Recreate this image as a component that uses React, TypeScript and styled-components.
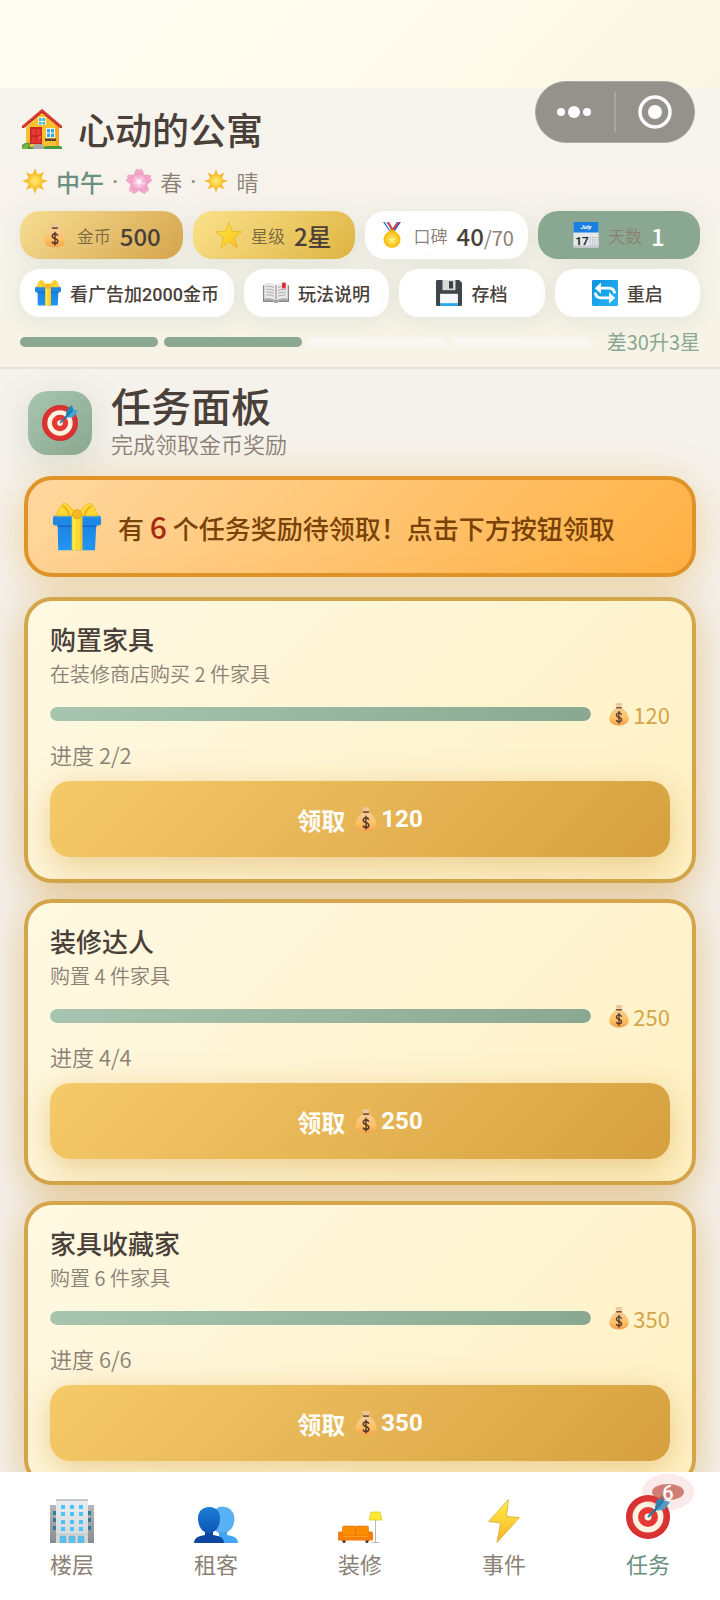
import React from 'react';
import styled, { createGlobalStyle, css } from 'styled-components';

type ChipTone = 'coin' | 'star' | 'plain' | 'day';

interface IconProps {
  size: number;
}

const IconDefs: React.FC = () => (
  <HiddenSvg aria-hidden="true">
    <defs>
      <radialGradient id="sunFill">
        <stop offset="0" stopColor="#fff176" />
        <stop offset="1" stopColor="#fbc02d" />
      </radialGradient>
      <radialGradient id="petalFill">
        <stop offset="0" stopColor="#fff" />
        <stop offset="0.4" stopColor="#fbd0e4" />
        <stop offset="1" stopColor="#e88fbc" />
      </radialGradient>
      <linearGradient id="bagFill" x1="0" y1="0" x2="0" y2="1">
        <stop offset="0" stopColor="#f2cfa0" />
        <stop offset="0.6" stopColor="#ffc163" />
        <stop offset="1" stopColor="#f3a04d" />
      </linearGradient>
      <linearGradient id="starFill" x1="0" y1="0" x2="1" y2="1">
        <stop offset="0" stopColor="#ffe94a" />
        <stop offset="1" stopColor="#f9bf1b" />
      </linearGradient>
      <linearGradient id="giftFill" x1="0" y1="0" x2="0" y2="1">
        <stop offset="0" stopColor="#1c7fe0" />
        <stop offset="1" stopColor="#2196f3" />
      </linearGradient>
      <linearGradient id="towerFill" x1="0" y1="0" x2="0" y2="1">
        <stop offset="0" stopColor="#eceff1" />
        <stop offset="1" stopColor="#cfd4d8" />
      </linearGradient>
      <linearGradient id="sideFill" x1="0" y1="0" x2="0" y2="1">
        <stop offset="0" stopColor="#b5b7b9" />
        <stop offset="1" stopColor="#8a8d90" />
      </linearGradient>
      <linearGradient id="personFill" x1="0" y1="0" x2="0" y2="1">
        <stop offset="0" stopColor="#1b7fd6" />
        <stop offset="1" stopColor="#0d55b3" />
      </linearGradient>
      <linearGradient id="boltFill" x1="0" y1="0" x2="0" y2="1">
        <stop offset="0" stopColor="#fff04a" />
        <stop offset="1" stopColor="#fbb321" />
      </linearGradient>
      <linearGradient id="loopFill" x1="0" y1="0" x2="1" y2="1">
        <stop offset="0" stopColor="#0a95e0" />
        <stop offset="1" stopColor="#29b6f6" />
      </linearGradient>
      <radialGradient id="targetFill">
        <stop offset="0.6" stopColor="#e53935" />
        <stop offset="1" stopColor="#d32f2f" />
      </radialGradient>
    </defs>
  </HiddenSvg>
);

const HouseIcon: React.FC<IconProps> = ({ size }) => (
  <svg width={size} height={size} viewBox="0 0 40 40" aria-hidden="true">
    <path d="M4 18 20 3l17 15v20H4z" fill="#fbc02d" />
    <path d="M33 14l4 4v20h-3z" fill="#f5a623" />
    <path d="M20 0 0 17v2h2L20 4l18 15h2v-2z" fill="#c62828" />
    <path d="M20 0 0 17l1 1L20 2l19 16 1-1z" fill="#e0483e" />
    <rect x="16" y="8" width="8" height="8" rx="1" fill="#fff3c4" />
    <path d="M17 9h2.500v3H17zM20.500 9H23v3h-2.500zM17 13h2.500v2.500H17zM20.500 13H23v2.500h-2.500z" fill="#35b1f0" />
    <path d="M8 18h12v17H8z" fill="#c62828" />
    <path d="M9.500 20h4v6h-4zM14.500 20h4v6h-4zM9.500 28h4v6h-4zM14.500 28h4v6h-4z" fill="#e53935" />
    <circle cx="18" cy="28" r="0.800" fill="#ffca28" />
    <rect x="24" y="19" width="9" height="10" fill="#fff8e1" />
    <path d="M25 20h3v3.500h-3zM29 20h3v3.500h-3zM25 24.500h3V28h-3zM29 24.500h3V28h-3z" fill="#29a8ef" />
    <path d="M23 29.500h11V32H23z" fill="#5d4037" />
    <path d="M0 40v-4q3-3 8-2v4h14l2-1h14l2 1v2z" fill="#4c9a3f" />
    <path d="M0 38q3-4 7-3v2H6v3H0z" fill="#7cb342" />
    <path d="M12 35h9v2h1v3H11v-3h1z" fill="#a7a9a6" />
  </svg>
);

const SunIcon: React.FC<IconProps> = ({ size }) => (
  <svg width={size} height={size} viewBox="0 0 64 64" aria-hidden="true">
    {[0, 45, 90, 135, 180, 225, 270, 315].map((angle) => (
      <path key={angle} d="M32 0l6 18H26z" fill="#fdb827" transform={`rotate(${angle} 32 32)`} />
    ))}
    <circle cx="32" cy="32" r="19" fill="url(#sunFill)" />
  </svg>
);

const BlossomIcon: React.FC<IconProps> = ({ size }) => (
  <svg width={size} height={size} viewBox="0 0 64 64" aria-hidden="true">
    {[0, 72, 144, 216, 288].map((angle) => (
      <path
        key={angle}
        d="M32 34C20 24 18 10 27 2l5 4 5-4c9 8 7 22-5 32z"
        fill="#f4a8cc"
        stroke="#e287b4"
        transform={`rotate(${angle} 32 34)`}
      />
    ))}
    <circle cx="32" cy="34" r="23" fill="url(#petalFill)" opacity="0.600" />
    <circle cx="32" cy="34" r="6" fill="#fff6fa" />
    {[36, 108, 180, 252, 324].map((angle) => (
      <path key={angle} d="M32 31V18" stroke="#fff0f6" strokeWidth="1.500" transform={`rotate(${angle} 32 34)`} />
    ))}
  </svg>
);

const MoneyBagIcon: React.FC<IconProps> = ({ size }) => (
  <svg width={size} height={size} viewBox="0 0 64 64" aria-hidden="true">
    <path d="M23 2q4 3 9 0 5 3 9 0 2 3-3 10H26Q21 5 23 2z" fill="#edc797" />
    <path d="M25 12h14l3 5q16 12 16 29-2 16-26 17Q8 62 6 46 6 29 22 17z" fill="url(#bagFill)" />
    <path d="M26 15h12" stroke="#7a5038" strokeWidth="4" strokeLinecap="round" />
    <path
      d="M39 34q-2-5-7-5t-7 5q0 5 7 7 7 2 7 7-1 5-7 5-6 0-7-5M32 24v34"
      stroke="#563a30"
      strokeWidth="3.500"
      fill="none"
    />
  </svg>
);

const StarIcon: React.FC<IconProps> = ({ size }) => (
  <svg width={size} height={size} viewBox="0 0 64 64" aria-hidden="true">
    <path
      d="M32 1l8 22 24 1-19 15 7 24-20-14-20 14 7-24L0 24l24-1z"
      fill="url(#starFill)"
      stroke="#e5a91c"
      strokeWidth="1.500"
      strokeLinejoin="round"
    />
  </svg>
);

const MedalIcon: React.FC<IconProps> = ({ size }) => (
  <svg width={size} height={size} viewBox="0 0 64 64" aria-hidden="true">
    <path d="M10 0h10l16 24H26z" fill="#2f6fd0" />
    <path d="M14 0h4l15 24h-4z" fill="#f4f6fa" />
    <path d="M54 0H44L28 24h10z" fill="#1f62c4" />
    <path d="M45 0h5L36 22h-5z" fill="#e8453c" />
    <path d="M20 0h5l12 20-4 4z" fill="#e8453c" />
    <rect x="25" y="19" width="14" height="6" rx="2" fill="#e8a317" />
    <circle cx="32" cy="43" r="21" fill="#f9c21e" />
    <circle cx="32" cy="43" r="16" fill="#ffd636" stroke="#f0ad14" strokeWidth="1.500" />
    <path d="M32 31l4 8 9 1-7 6 2 9-8-4-8 4 2-9-7-6 9-1z" fill="#fff07a" stroke="#f0a90e" />
  </svg>
);

const CalendarIcon: React.FC<IconProps> = ({ size }) => (
  <svg width={size} height={size} viewBox="0 0 64 64" aria-hidden="true">
    <rect x="1" y="1" width="62" height="62" rx="2" fill="#e6e9eb" />
    <path d="M1 58h62v3q0 2-2 2H3q-2 0-2-2z" fill="#c5cacd" />
    <path d="M3 0h58q2 0 2 2v24H1V2q0-2 2-2z" fill="#1a7fdf" />
    <text x="32" y="18" fill="#fff" fontFamily="Roboto" fontSize="15" fontStyle="italic" fontWeight="700" textAnchor="middle">
      July
    </text>
    <text x="22" y="56" fill="#26292b" fontFamily="Roboto" fontSize="29" fontWeight="700" textAnchor="middle">
      17
    </text>
    <path d="M41 38h19M41 44h19M41 50h19M41 56h19" stroke="#a4abaf" strokeWidth="2.500" strokeDasharray="3 2.500" />
  </svg>
);

const GiftIcon: React.FC<IconProps> = ({ size }) => (
  <svg width={size} height={size} viewBox="0 0 64 64" aria-hidden="true">
    <path d="M6 23h52l-2 40H7z" fill="url(#giftFill)" />
    <path d="M6 29h52v3H6z" fill="#1467c4" />
    <rect x="0" y="17" width="64" height="13" rx="3" fill="#1e88e5" />
    <path d="M2 18h60" stroke="#3f9ff0" strokeWidth="2" />
    <path d="M25 17h14v46H25z" fill="#fdd835" />
    <path d="M27 17h3v46h-3z" fill="#ffec4a" />
    <path d="M36 17h3v46h-3z" fill="#f5c62a" />
    <path d="M29 12Q18-2 13 1 8 5 4 17q12 1 25-1z" fill="#fdd835" stroke="#e6b91a" />
    <path d="M35 12Q46-2 51 1q5 4 9 16-12 1-25-1z" fill="#fdd835" stroke="#e6b91a" />
    <path d="M13 4q6 3 9 12M51 4q-6 3-9 12" fill="none" stroke="#e3ab18" strokeWidth="2" />
    <circle cx="32" cy="15" r="6" fill="#f5b921" stroke="#dc9c12" />
  </svg>
);

const BookIcon: React.FC<IconProps> = ({ size }) => (
  <svg width={size} height={size} viewBox="0 0 64 64" aria-hidden="true">
    <path d="M0 13h64v41H38q-6 5-12 0H0z" fill="#8a8588" />
    <path d="M3 8q18-4 29 4 11-8 29-4v43q-18-4-29 4-11-8-29-4z" fill="#e9e9ea" />
    <path d="M3 46q18-4 29 5 11-9 29-5v6q-18-3-29 5-11-8-29-5z" fill="#a9a7a9" />
    <path d="M32 12v41" stroke="#8f8d90" strokeWidth="2.500" />
    <path
      d="M8 16q10-2 19 3M8 23q10-2 19 3M8 30q10-2 19 3M8 37q10-2 19 3M37 19q5-3 8-3M37 26q9-4 19-3M37 33q9-4 19-3M37 40q9-4 19-3"
      fill="none"
      stroke="#9b9c9f"
      strokeWidth="2"
    />
    <path d="M47 7q4-2 9 0v15l-4-3-5 3z" fill="#e02a33" />
  </svg>
);

const FloppyIcon: React.FC<IconProps> = ({ size }) => (
  <svg width={size} height={size} viewBox="0 0 64 64" aria-hidden="true">
    <path d="M3 0h54l7 7v54q0 3-3 3H3q-3 0-3-3V3q0-3 3-3z" fill="#3f474c" />
    <path d="M16 0h32v25H16z" fill="#d7dbdd" />
    <path d="M32 3h10v18H32z" fill="#3a4247" />
    <path d="M10 34h44v30H10z" fill="#f5f7f8" />
    <path d="M10 57h44v7H10z" fill="#29a8e8" />
  </svg>
);

const RestartIcon: React.FC<IconProps> = ({ size }) => (
  <svg width={size} height={size} viewBox="0 0 64 64" aria-hidden="true">
    <rect width="64" height="64" rx="3" fill="url(#loopFill)" />
    <path d="M20 20h22q12 0 14 13" fill="none" stroke="#fff" strokeWidth="7" />
    <path d="M22 6v28L7 20z" fill="#fff" />
    <path d="M44 44H22Q10 44 8 31" fill="none" stroke="#fff" strokeWidth="7" />
    <path d="M42 58V30l15 14z" fill="#fff" />
  </svg>
);

const TargetIcon: React.FC<IconProps> = ({ size }) => (
  <svg width={size} height={size} viewBox="0 0 64 64" aria-hidden="true">
    <circle cx="32" cy="32" r="32" fill="url(#targetFill)" />
    <circle cx="32" cy="32" r="22.500" fill="#fdf3e0" />
    <circle cx="32" cy="32" r="14.500" fill="#e53935" />
    <circle cx="32" cy="32" r="5" fill="#fdf3e0" />
    <path d="M32 32l17-17" stroke="#1f7fae" strokeWidth="3" />
    <path d="M42 20l2-11 9-9 3 8-9 12z" fill="#1e88bf" />
    <path d="M44 20l12-12 8 2-8 11-12 2z" fill="#42a5d8" />
    <path d="M40 24l14-14" stroke="#17719f" strokeWidth="2" />
  </svg>
);

const BuildingIcon: React.FC<IconProps> = ({ size }) => (
  <svg width={size} height={size} viewBox="0 0 44 44" aria-hidden="true">
    <path d="M0 6h7v38H0zM37 6h7v38h-7z" fill="url(#sideFill)" />
    <path d="M3 12h3v4H3zM3 19h3v4H3zM3 27h3v4H3zM38 12h3v4h-3zM38 19h3v4h-3zM38 27h3v4h-3z" fill="#2f7f9f" />
    <path d="M6 0h32v44H6z" fill="url(#towerFill)" />
    <path d="M6 0h32v2H6zM6 35h32v1H6z" fill="#c2c7ca" />
    {[6, 13, 21, 28].map((y) => (
      <path key={y} d={`M11 ${y}h4v4h-4zM20 ${y}h4v4h-4zM29 ${y}h4v4h-4z`} fill="#4fc3f7" />
    ))}
    <path d="M10 37h6v7h-6zM19 37h6v7h-6zM28 37h6v7h-6z" fill="#4fc3f7" stroke="#8ea3ad" strokeWidth="0.500" />
  </svg>
);

const PeopleIcon: React.FC<IconProps> = ({ size }) => (
  <svg width={size} height={size} viewBox="0 0 44 44" aria-hidden="true">
    <path d="M20 44V38l5-1v-6h8v5q11 1 11 8z" fill="#42a5f5" />
    <path d="M28 8c8 0 12 5 12 12s-4 14-12 14-8-6-8-14 2-12 8-12z" fill="#58b0f5" stroke="#3b8fd6" strokeWidth="0.500" />
    <path d="M0 44q0-7 11-8v-5h8v5q11 1 11 8z" fill="#0d47a1" />
    <path d="M15 8c8 0 11 5 11 11 0 8-4 15-11 15S4 27 4 19C4 13 8 8 15 8z" fill="url(#personFill)" />
  </svg>
);

const CouchIcon: React.FC<IconProps> = ({ size }) => (
  <svg width={size} height={size} viewBox="0 0 44 44" aria-hidden="true">
    <path d="M33 13h9l2 8H31z" fill="#fdea35" stroke="#e0c92c" strokeWidth="0.800" />
    <path d="M37.500 21v22M34 43.500h7" stroke="#b4b9bc" fill="none" />
    <path d="M4 41h4l-1 3H5zM27 41h4l-1 3h-2z" fill="#4e342e" />
    <path
      d="M6 27h10q1.500 0 1.500 1.500V37H4.500v-8.500Q4.500 27 6 27zM19 27h10q1.500 0 1.500 1.500V37H17.500v-8.500Q17.500 27 19 27z"
      fill="#fb8c00"
      stroke="#d97706"
      strokeWidth="0.600"
    />
    <path
      d="M0 34q0-1.500 1.500-1.500H4q1 0 1 1.500v3h25v-3q0-1.500 1-1.500h2.500Q35 32.500 35 34v6.500q0 1-1 1H1q-1 0-1-1z"
      fill="#f57f0a"
    />
    <path d="M5 37.500h25" stroke="#ff9a1a" fill="none" />
  </svg>
);

const BoltIcon: React.FC<IconProps> = ({ size }) => (
  <svg width={size} height={size} viewBox="0 0 44 44" aria-hidden="true">
    <path
      d="M26.500 0.500 6.500 22.500l12 1.500L15 43.500 37.500 18.500 24.500 17.500z"
      fill="url(#boltFill)"
      stroke="#d7a93a"
      strokeWidth="0.800"
      strokeLinejoin="round"
    />
  </svg>
);

const actions = [
  { icon: GiftIcon, label: '看广告加2000金币' },
  { icon: BookIcon, label: '玩法说明' },
  { icon: FloppyIcon, label: '存档' },
  { icon: RestartIcon, label: '重启' },
];

const tasks = [
  { title: '购置家具', desc: '在装修商店购买 2 件家具', done: 2, total: 2, reward: 120 },
  { title: '装修达人', desc: '购置 4 件家具', done: 4, total: 4, reward: 250 },
  { title: '家具收藏家', desc: '购置 6 件家具', done: 6, total: 6, reward: 350 },
];

const tabs = [
  { icon: BuildingIcon, label: '楼层' },
  { icon: PeopleIcon, label: '租客' },
  { icon: CouchIcon, label: '装修' },
  { icon: BoltIcon, label: '事件' },
  { icon: TargetIcon, label: '任务', active: true, badge: 6 },
];

const App: React.FC = () => {
  return (
    <>
      <GlobalStyle />
      <IconDefs />
      <Screen>
        <StatusArea />
        <Capsule>
          <CapsuleButton type="button" aria-label="更多">
            <svg width="36" height="14" viewBox="0 0 36 14">
              <circle cx="4" cy="7" r="4" fill="#fff" />
              <circle cx="17" cy="7" r="6" fill="#fff" />
              <circle cx="30" cy="7" r="4" fill="#fff" />
            </svg>
          </CapsuleButton>
          <CapsuleDivider />
          <CapsuleButton type="button" aria-label="关闭">
            <svg width="34" height="34" viewBox="0 0 34 34">
              <circle cx="17" cy="17" r="15" fill="none" stroke="#fff" strokeWidth="3.500" />
              <circle cx="17" cy="17" r="7" fill="#fff" />
            </svg>
          </CapsuleButton>
        </Capsule>
        <Header>
          <TitleRow>
            <HouseIcon size={40} />
            <Title>心动的公寓</Title>
          </TitleRow>
          <MetaRow>
            <SunIcon size={26} />
            <TimeText>中午</TimeText>
            <Dot>·</Dot>
            <BlossomIcon size={26} />
            <span>春</span>
            <Dot>·</Dot>
            <SunIcon size={24} />
            <span>晴</span>
          </MetaRow>
          <ChipRow>
            <Chip $tone="coin">
              <MoneyBagIcon size={26} />
              <ChipLabel>金币</ChipLabel>
              <ChipValue>500</ChipValue>
            </Chip>
            <Chip $tone="star">
              <StarIcon size={26} />
              <ChipLabel>星级</ChipLabel>
              <ChipValue>2星</ChipValue>
            </Chip>
            <Chip $tone="plain">
              <MedalIcon size={26} />
              <ChipLabel>口碑</ChipLabel>
              <ChipValue>
                40<ChipTotal>/70</ChipTotal>
              </ChipValue>
            </Chip>
            <Chip $tone="day">
              <CalendarIcon size={26} />
              <ChipLabel>天数</ChipLabel>
              <ChipValue>1</ChipValue>
            </Chip>
          </ChipRow>
          <ActionRow>
            {actions.map(({ icon: Icon, label }) => (
              <Action key={label} type="button">
                <Icon size={26} />
                {label}
              </Action>
            ))}
          </ActionRow>
          <StarProgress>
            <Segment $filled />
            <Segment $filled />
            <Segment />
            <Segment />
            <StarHint>差30升3星</StarHint>
          </StarProgress>
        </Header>

        <Content>
          <PanelHeader>
            <PanelIcon>
              <TargetIcon size={36} />
            </PanelIcon>
            <PanelHeading>
              <PanelTitle>任务面板</PanelTitle>
              <PanelDesc>完成领取金币奖励</PanelDesc>
            </PanelHeading>
          </PanelHeader>
          <Banner>
            <GiftIcon size={48} />
            <BannerText>
              有 <strong>6</strong> 个任务奖励待领取！点击下方按钮领取
            </BannerText>
          </Banner>
          {tasks.map((task) => (
            <Card key={task.title}>
              <CardTitle>{task.title}</CardTitle>
              <CardDesc>{task.desc}</CardDesc>
              <ProgressRow>
                <Track>
                  <Fill style={{ width: `${(task.done / task.total) * 100}%` }} />
                </Track>
                <Reward>
                  <MoneyBagIcon size={24} />
                  {task.reward}
                </Reward>
              </ProgressRow>
              <ProgressText>
                进度 {task.done}/{task.total}
              </ProgressText>
              <ClaimButton type="button">
                领取
                <ClaimAmount>
                  <MoneyBagIcon size={26} />
                  {task.reward}
                </ClaimAmount>
              </ClaimButton>
            </Card>
          ))}
        </Content>

        <TabBar>
          {tabs.map(({ icon: Icon, label, active, badge }) => (
            <Tab key={label} type="button" $active={active}>
              <TabIcon $active={active}>
                <Icon size={44} />
              </TabIcon>
              {label}
              {badge && <Badge>{badge}</Badge>}
            </Tab>
          ))}
        </TabBar>
      </Screen>
    </>
  );
};

const GlobalStyle = createGlobalStyle`
  * {
    box-sizing: border-box;
  }

  body {
    margin: 0;
    background: #f5f1eb;
    color: #4a403a;
    font-family: 'Noto Sans CJK SC', sans-serif;
  }

  button {
    margin: 0;
    padding: 0;
    border: none;
    background: none;
    color: inherit;
    font-family: Roboto, 'Noto Sans CJK SC', sans-serif;
    cursor: pointer;
  }

  h1, h2, h3, p {
    margin: 0;
  }

  svg {
    flex: none;
  }
`;

const HiddenSvg = styled.svg`
  position: absolute;
  width: 0;
  height: 0;
`;

const Screen = styled.div`
  position: relative;
  display: flex;
  flex-direction: column;
  height: 100vh;
  overflow: hidden;
`;

const StatusArea = styled.div`
  flex: none;
  height: 88px;
  background: linear-gradient(135deg, #fffdf3 0%, #fffcee 50%, #faf6e3 100%);
`;

const Capsule = styled.div`
  position: absolute;
  top: 81px;
  right: 25px;
  z-index: 2;
  display: flex;
  align-items: center;
  width: 160px;
  height: 62px;
  border: 1px solid #aaa7a0;
  border-radius: 31px;
  background: #95928c;
`;

const CapsuleButton = styled.button`
  display: flex;
  flex: 1;
  align-items: center;
  justify-content: center;
`;

const CapsuleDivider = styled.div`
  width: 2px;
  height: 40px;
  background: #aaa7a2;
`;

const Header = styled.header`
  flex: none;
  padding: 16px 20px 10px;
  border-bottom: 2px solid #e8e3dc;
  background: linear-gradient(180deg, #f7f3ed 0%, #f7f3ec 45%, #f7f3e6 100%);
`;

const TitleRow = styled.div`
  display: flex;
  align-items: center;
  gap: 16px;
  height: 50px;
  padding-left: 2px;
`;

const Title = styled.h1`
  font-size: 37px;
  font-weight: 500;
  line-height: 48px;
`;

const MetaRow = styled.div`
  display: flex;
  align-items: center;
  gap: 8px;
  height: 54px;
  padding-left: 2px;
  color: #8b8075;
  font-size: 22px;
  font-weight: 350;
`;

const TimeText = styled.span`
  color: #6b9080;
  font-size: 24px;
  font-weight: 500;
`;

const Dot = styled.span`
  font-family: Roboto, sans-serif;
  font-weight: 500;
`;

const ChipRow = styled.div`
  display: flex;
  gap: 10px;
  margin-top: 3px;
`;

const tones = {
  coin: css`
    background: linear-gradient(135deg, #f6dd92 0%, #d6a54c 100%);
  `,
  star: css`
    background: linear-gradient(135deg, #fae18a 0%, #dfb544 100%);
  `,
  plain: css`
    background: #fff;
  `,
  day: css`
    background: #8aa891;
  `,
};

const Chip = styled.div<{ $tone: ChipTone }>`
  display: flex;
  flex: 1;
  align-items: center;
  justify-content: center;
  gap: 9px;
  height: 48px;
  border-radius: 20px;
  box-shadow: 0 4px 24px rgba(138, 168, 145, 0.18);
  color: ${(props) => (props.$tone === 'day' ? '#fff' : '#4a403a')};
  white-space: nowrap;
  ${(props) => tones[props.$tone]}
`;

const ChipLabel = styled.span`
  color: #8b8075;
  font-size: 17px;
  font-weight: 350;

  ${Chip}:nth-child(-n + 2) & {
    color: #7a6840;
  }
`;

const ChipValue = styled.span`
  font-size: 24px;
  font-weight: 500;
`;

const ChipTotal = styled.span`
  color: #8b8075;
  font-size: 20px;
  font-weight: 400;
`;

const ActionRow = styled.div`
  display: flex;
  gap: 10px;
  margin-top: 10px;
`;

const Action = styled.button`
  display: flex;
  flex: 1 0 0;
  min-width: max-content;
  align-items: center;
  justify-content: center;
  gap: 9px;
  height: 48px;
  padding: 0 15px;
  border-radius: 20px;
  background: #fff;
  box-shadow: 0 4px 24px rgba(138, 168, 145, 0.18);
  font-size: 18px;
  font-weight: 500;
`;

const StarProgress = styled.div`
  display: flex;
  align-items: center;
  gap: 6px;
  height: 30px;
  margin-top: 10px;
`;

const Segment = styled.div<{ $filled?: boolean }>`
  flex: 1;
  height: 10px;
  border-radius: 5px;
  background: ${(props) => (props.$filled ? '#8aa891' : '#f9f7f1')};
`;

const StarHint = styled.span`
  margin-left: 10px;
  color: #8aa891;
  font-size: 20px;
  line-height: 30px;
`;

const Content = styled.main`
  display: flex;
  flex: 1;
  flex-direction: column;
  gap: 16px;
  min-height: 0;
  padding: 19px 24px;
  overflow-y: auto;
  scrollbar-width: none;

  & > * {
    flex: none;
  }
`;

const PanelHeader = styled.div`
  display: flex;
  align-items: center;
  gap: 19px;
  height: 70px;
  margin-bottom: 2px;
  padding: 0 4px;
`;

const PanelIcon = styled.div`
  display: flex;
  align-items: center;
  justify-content: center;
  width: 64px;
  height: 64px;
  border-radius: 20px;
  background: linear-gradient(135deg, #a8c5b0 0%, #8aa891 100%);
  box-shadow: 0 8px 32px rgba(138, 168, 145, 0.25);
`;

const PanelHeading = styled.div`
  padding-bottom: 4px;
`;

const PanelTitle = styled.h2`
  font-size: 40px;
  font-weight: 500;
  line-height: 44px;
`;

const PanelDesc = styled.p`
  color: #8b8075;
  font-size: 22px;
  font-weight: 350;
  line-height: 32px;
`;

const Banner = styled.div`
  display: flex;
  align-items: center;
  gap: 17px;
  height: 101px;
  margin-bottom: 4px;
  padding: 0 25px;
  border: 4px solid #e09428;
  border-radius: 28px;
  background: linear-gradient(135deg, #ffd8a0 0%, #ffb042 100%);
  box-shadow: 0 8px 40px rgba(224, 165, 50, 0.4);
`;

const BannerText = styled.p`
  color: #7a4206;
  font-size: 26px;
  font-weight: 500;
  line-height: 40px;

  strong {
    color: #a82a10;
    font-size: 30px;
    font-weight: 500;
  }
`;

const Card = styled.section`
  padding: 20px 22px 22px;
  border: 4px solid #d4a54a;
  border-radius: 28px;
  background: linear-gradient(135deg, #fff9e3 0%, #fff1c4 100%);
  box-shadow: 0 8px 40px rgba(212, 155, 60, 0.5);
`;

const CardTitle = styled.h3`
  font-size: 26px;
  font-weight: 500;
  line-height: 36px;
`;

const CardDesc = styled.p`
  margin-top: 2px;
  color: #8b8075;
  font-size: 20px;
  font-weight: 350;
  line-height: 30px;
`;

const ProgressRow = styled.div`
  display: flex;
  align-items: center;
  gap: 16px;
  height: 32px;
  margin-top: 9px;
`;

const Track = styled.div`
  flex: 1;
  height: 14px;
  overflow: hidden;
  border-radius: 7px;
  background: #f0eadb;
`;

const Fill = styled.div`
  height: 100%;
  border-radius: 7px;
  background: linear-gradient(135deg, #a8c5b0 0%, #8aa891 100%);
`;

const Reward = styled.span`
  display: flex;
  align-items: center;
  gap: 2px;
  color: #d4a54a;
  font-size: 22px;
  line-height: 32px;
`;

const ProgressText = styled.p`
  margin-top: 8px;
  color: #8b8075;
  font-size: 22px;
  font-weight: 350;
  line-height: 32px;
`;

const ClaimButton = styled.button`
  display: flex;
  align-items: center;
  justify-content: center;
  gap: 8px;
  width: 100%;
  height: 76px;
  margin-top: 11px;
  border-radius: 20px;
  background: linear-gradient(135deg, #f6ca69 0%, #d6a040 100%);
  box-shadow: 0 8px 32px rgba(212, 165, 74, 0.5);
  color: #fff;
  font-size: 24px;
  font-weight: 700;
`;

const ClaimAmount = styled.span`
  display: flex;
  align-items: center;
  gap: 2px;
`;

const TabBar = styled.nav`
  position: relative;
  display: flex;
  flex: none;
  height: 128px;
  background: #fff;
`;

const Tab = styled.button<{ $active?: boolean }>`
  position: relative;
  display: flex;
  flex: 1;
  flex-direction: column;
  align-items: center;
  gap: 7px;
  padding-top: 27px;
  color: ${(props) => (props.$active ? '#6b9080' : '#8b8075')};
  font-size: 22px;
  line-height: 32px;
`;

const TabIcon = styled.span<{ $active?: boolean }>`
  height: 44px;
  transform: ${(props) => (props.$active ? 'translateY(-4px)' : 'none')};

  svg {
    display: block;
  }
`;

const Badge = styled.span`
  position: absolute;
  top: 12px;
  right: 36px;
  width: 32px;
  height: 16px;
  border-radius: 50%;
  background: rgba(196, 92, 80, 0.8);
  box-shadow: 0 0 0 10px rgba(220, 80, 80, 0.12);
  color: #fff;
  font-size: 20px;
  font-weight: 500;
  line-height: 18px;
  text-align: center;
`;

export default App;
